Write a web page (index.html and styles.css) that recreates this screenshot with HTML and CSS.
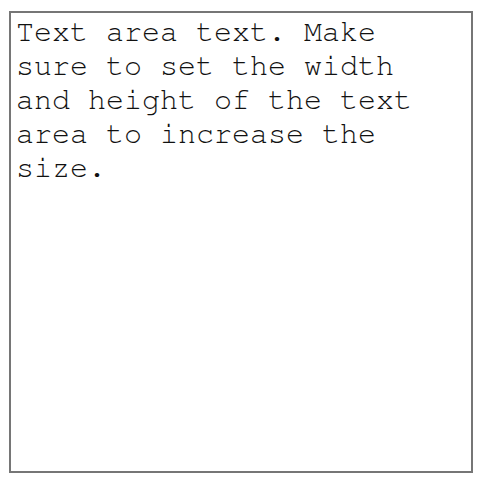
FILE: index.html
```html
<!DOCTYPE html>
<html>
<head>
<meta charset="utf-8">
<link rel="stylesheet" href="styles.css">
</head>
<body>
<div class="page">
<textarea class="area">Text area text. Make sure to set the width and height of the text area to increase the size.</textarea>
</div>
</body>
</html>
```
FILE: styles.css
```css
html, body {
  margin: 0;
  padding: 0;
  background: #ffffff;
}
.page {
  padding: 11px 0 0 9px;
}
.area {
  display: block;
  box-sizing: border-box;
  width: 464px;
  height: 462px;
  margin: 0;
  padding: 2px 9px 4px 5px;
  border: 2px solid #767676;
  border-radius: 0;
  background: #ffffff;
  color: #111111;
  font-family: "Nimbus Mono PS", "Nimbus Mono L", "FreeMono", "Courier 10 Pitch", "Liberation Mono", monospace;
  font-size: 30px;
  line-height: 34px;
  resize: none;
  overflow: hidden;
  outline: none;
}
```
